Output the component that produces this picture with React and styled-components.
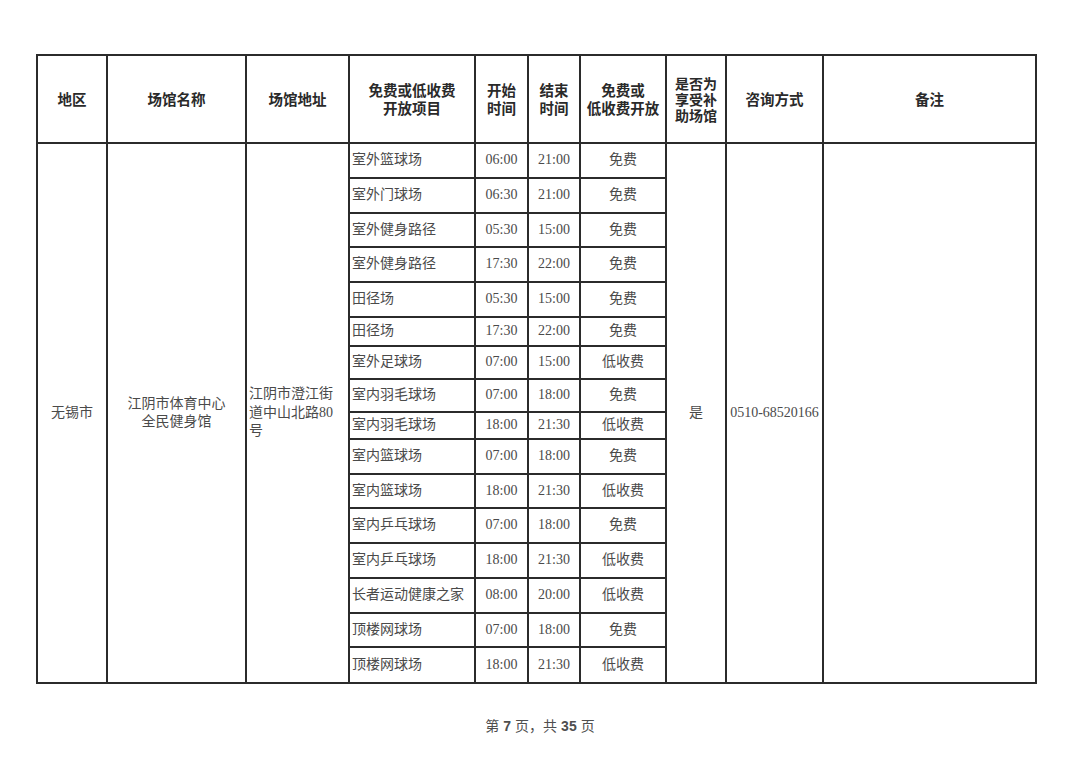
import React from "react";
import styled, { createGlobalStyle } from "styled-components";

const Global = createGlobalStyle`
  html, body { margin: 0; padding: 0; background: #ffffff; }
  #root { width: 1080px; min-height: 764px; }
`;

const Page = styled.div`
  width: 1080px;
  height: 764px;
  box-sizing: border-box;
  padding: 54px 0 0 36px;
  background: #ffffff;
  overflow: hidden;
`;

const Table = styled.div`
  display: grid;
  width: 1001px;
  box-sizing: border-box;
  padding: 2px;
  gap: 2px;
  background: #2b2b2b;
  grid-template-columns: 68px 137px 101px 124px 51px 50px 84px 58px 95px 211px;
  grid-template-rows: 86px 33px 33px 32px 33px 33px 27px 31px 31px 25px 33px 32px 33px 33px 33px 32px 34px;
`;

const HeadCell = styled.div`
  background: #ffffff;
  display: flex;
  align-items: center;
  justify-content: center;
  text-align: center;
  font-family: "Noto Sans CJK SC", "Noto Sans", sans-serif;
  font-weight: 700;
  font-size: ${(p) => p.$fs || "14.5px"};
  line-height: ${(p) => p.$lh || "18px"};
  color: #2a2a2a;
`;

const Cell = styled.div`
  background: #ffffff;
  display: flex;
  align-items: center;
  justify-content: ${(p) => (p.$left ? "flex-start" : "center")};
  text-align: ${(p) => (p.$left ? "left" : "center")};
  padding-left: ${(p) => (p.$left ? "2px" : "0")};
  font-family: "Liberation Serif", "Noto Sans CJK SC", serif;
  font-size: 14px;
  line-height: 18.5px;
  color: #4a4a4a;
  white-space: nowrap;
  grid-column: ${(p) => p.$col || "auto"};
  grid-row: ${(p) => p.$row || "auto"};
`;

const Footer = styled.div`
  margin-top: 31px;
  margin-left: -36px;
  width: 1080px;
  text-align: center;
  font-family: "Noto Sans CJK SC", "Noto Sans", sans-serif;
  font-size: 14px;
  line-height: 20px;
  color: #4f4f4f;
`;

const Num = styled.b`
  font-family: "Liberation Sans", Arial, sans-serif;
  font-weight: 700;
  margin: 0 4px;
`;

const rows = [
  ["室外篮球场", "06:00", "21:00", "免费"],
  ["室外门球场", "06:30", "21:00", "免费"],
  ["室外健身路径", "05:30", "15:00", "免费"],
  ["室外健身路径", "17:30", "22:00", "免费"],
  ["田径场", "05:30", "15:00", "免费"],
  ["田径场", "17:30", "22:00", "免费"],
  ["室外足球场", "07:00", "15:00", "低收费"],
  ["室内羽毛球场", "07:00", "18:00", "免费"],
  ["室内羽毛球场", "18:00", "21:30", "低收费"],
  ["室内篮球场", "07:00", "18:00", "免费"],
  ["室内篮球场", "18:00", "21:30", "低收费"],
  ["室内乒乓球场", "07:00", "18:00", "免费"],
  ["室内乒乓球场", "18:00", "21:30", "低收费"],
  ["长者运动健康之家", "08:00", "20:00", "低收费"],
  ["顶楼网球场", "07:00", "18:00", "免费"],
  ["顶楼网球场", "18:00", "21:30", "低收费"],
];

const span = `2 / span ${rows.length}`;

export default function App() {
  return (
    <>
      <Global />
      <Page>
        <Table>
          <HeadCell>地区</HeadCell>
          <HeadCell>场馆名称</HeadCell>
          <HeadCell>场馆地址</HeadCell>
          <HeadCell>免费或低收费<br />开放项目</HeadCell>
          <HeadCell>开始<br />时间</HeadCell>
          <HeadCell>结束<br />时间</HeadCell>
          <HeadCell>免费或<br />低收费开放</HeadCell>
          <HeadCell $lh="16px" $fs="14px">是否为<br />享受补<br />助场馆</HeadCell>
          <HeadCell>咨询方式</HeadCell>
          <HeadCell>备注</HeadCell>

          <Cell $col="1" $row={span}>无锡市</Cell>
          <Cell $col="2" $row={span}>江阴市体育中心<br />全民健身馆</Cell>
          <Cell $col="3" $row={span} $left>江阴市澄江街<br />道中山北路80<br />号</Cell>
          <Cell $col="8" $row={span}>是</Cell>
          <Cell $col="9" $row={span}>0510-68520166</Cell>
          <Cell $col="10" $row={span}></Cell>

          {rows.map((r, i) => (
            <React.Fragment key={i}>
              <Cell $col="4" $row={`${i + 2}`} $left>{r[0]}</Cell>
              <Cell $col="5" $row={`${i + 2}`}>{r[1]}</Cell>
              <Cell $col="6" $row={`${i + 2}`}>{r[2]}</Cell>
              <Cell $col="7" $row={`${i + 2}`}>{r[3]}</Cell>
            </React.Fragment>
          ))}
        </Table>
        <Footer>
          第<Num>7</Num>页，共<Num>35</Num>页
        </Footer>
      </Page>
    </>
  );
}
